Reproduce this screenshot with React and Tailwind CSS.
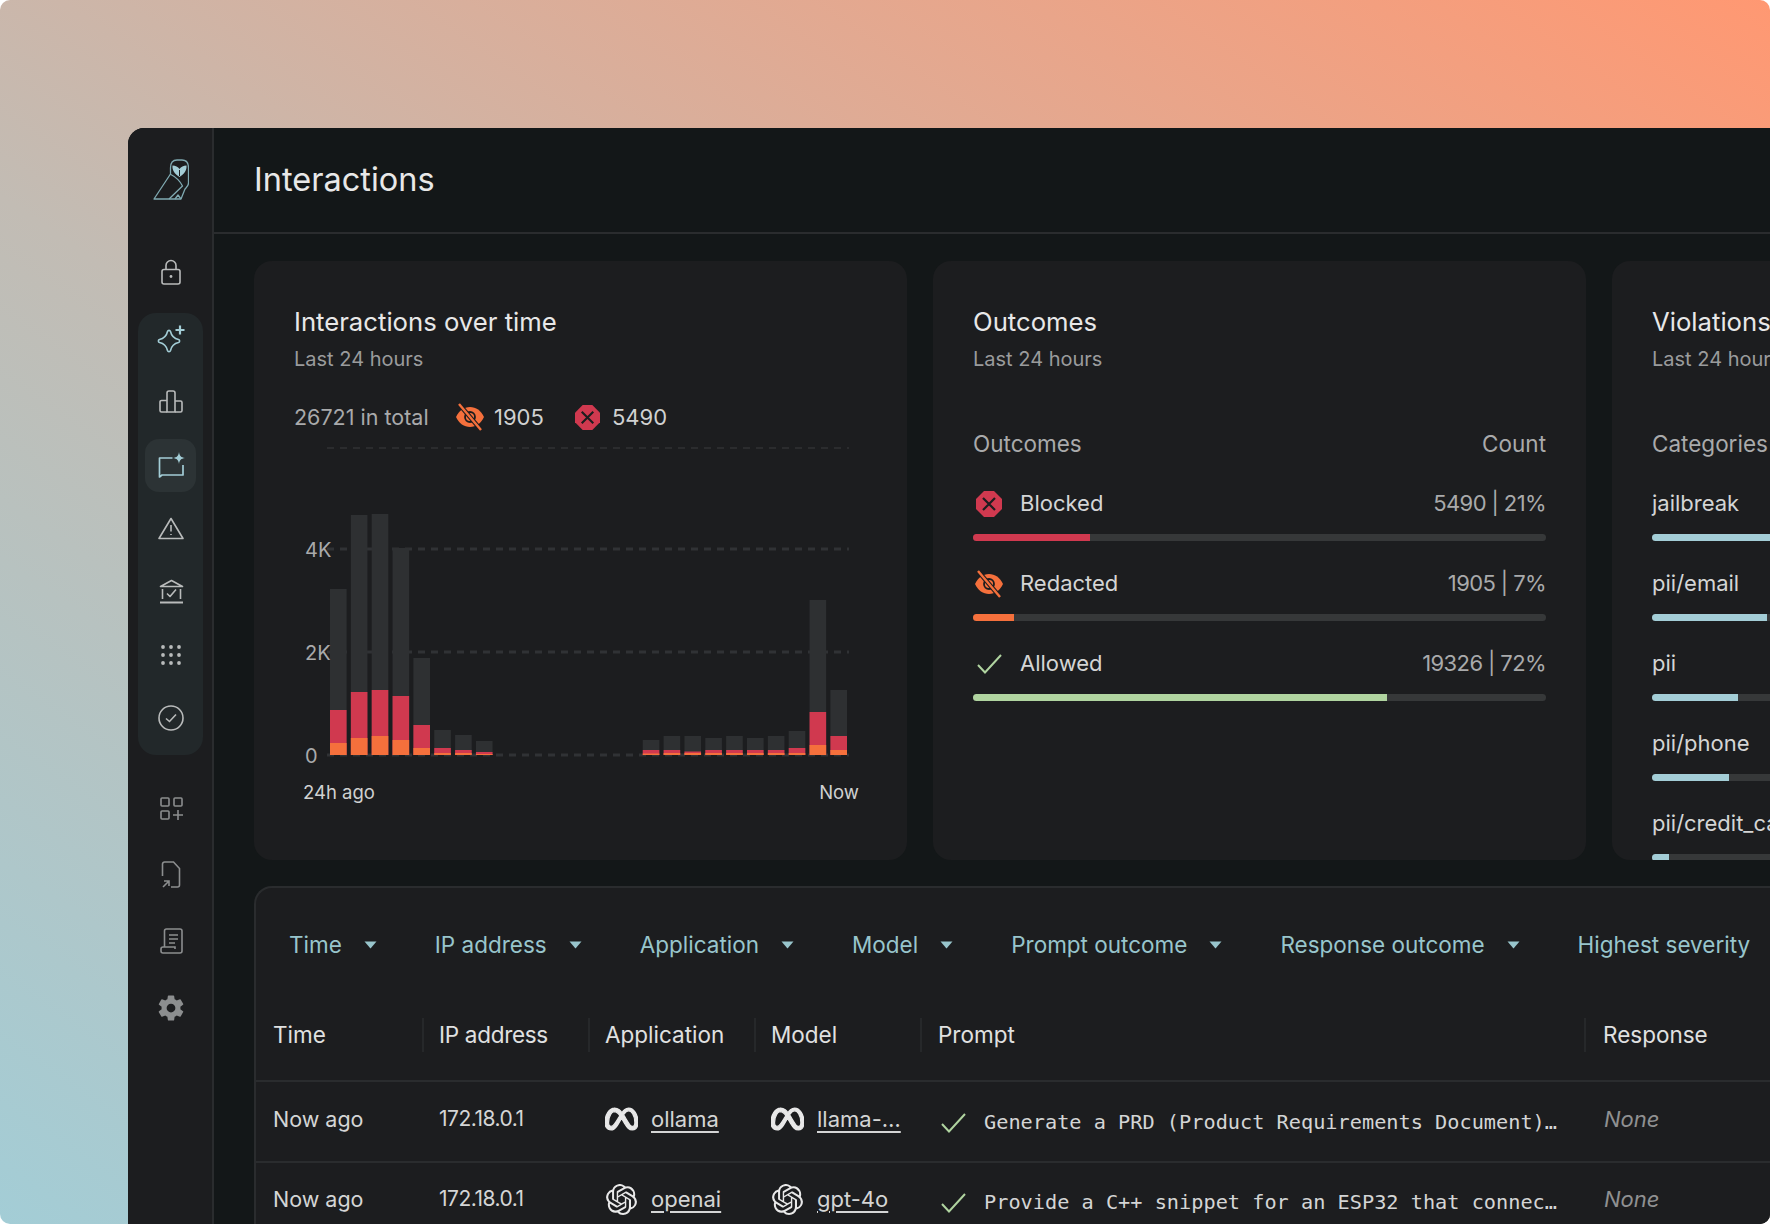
import { SiOpenai, SiMeta } from "react-icons/si";
import { IoSettingsSharp } from "react-icons/io5";

const bars = [
  [166, 45, 12], [240, 63, 17], [241, 65, 19], [207, 59, 15], [97, 30, 7], [25, 7, 2], [20, 5, 2], [14, 3, 1],
  null, null, null, null, null, null, null,
  [15, 5, 1.5], [19, 5, 2], [19, 3.5, 2], [17, 5, 2], [19, 5, 2], [17, 5, 2], [19, 5, 2], [24, 7, 2],
  [155, 43, 10], [65, 19, 5],
];

const Owl = () => (
  <svg width="36" height="42" viewBox="0 0 36 42" fill="none" stroke="#7fa9b1" strokeWidth="1.3" strokeLinejoin="round">
    <path d="M17.5 15V9C17.5 4 20 1 24 1H29C33 1 35.5 4 35.5 9V24C35.5 27 34 28 32 30L28 40H1L17.5 15Z" />
    <path d="M17 15C21 17 27 22 29.5 27L16 40" />
    <path d="M22 40L25 36L28 40" />
    <path d="M19.5 6.500C22.500 6.500 25 8 26.500 10C28 8 30.500 6.500 33.500 6.500C34 11 31.500 15 26.500 18C21.500 15 19 11 19.500 6.500Z" fill="#a3cdd6" stroke="none" />
    <path d="M26.500 11V17" stroke="#1c1d1f" strokeWidth="1" />
  </svg>
);

const Lock = () => (
  <svg width="20" height="26" viewBox="0 0 20 26" fill="none" stroke="#b9bbbb" strokeWidth="1.6">
    <rect x="1" y="10.5" width="18" height="14.5" rx="2" />
    <path d="M5 10.5V6.5a5 5 0 0 1 10 0v4" />
    <circle cx="10" cy="17.5" r="1.4" fill="#b9bbbb" stroke="none" />
  </svg>
);

const SparklePlus = () => (
  <svg width="28" height="28" viewBox="0 0 28 28" fill="none" stroke="#a3cdd6" strokeWidth="1.6" strokeLinejoin="round">
    <path d="M10.500 6.500C11 5 13 5 13.500 6.500C14.500 11 17 13.500 21.500 14.500C23 15 23 17 21.500 17.500C17 18.500 14.500 21 13.500 25.500C13 27 11 27 10.500 25.500C9.500 21 7 18.500 2.500 17.500C1 17 1 15 2.500 14.500C7 13.500 9.500 11 10.500 6.500Z" />
    <path d="M23 0.500V9.500M18.500 5H27.500" strokeWidth="2.2" />
  </svg>
);

const BarsIcon = () => (
  <svg width="24" height="23" viewBox="0 0 24 23" fill="none" stroke="#b9bbbb" strokeWidth="1.6" strokeLinejoin="round">
    <path d="M8 22H2.500A1.500 1.500 0 0 1 1 20.500V12A1.500 1.500 0 0 1 2.500 10.500H8" />
    <path d="M8 22V3A2 2 0 0 1 10 1H14A2 2 0 0 1 16 3V22H8Z" />
    <path d="M16 11H21.500A1.500 1.500 0 0 1 23 12.500V20.500A1.500 1.500 0 0 1 21.500 22H16" />
  </svg>
);

const ChatSpark = () => (
  <svg width="27" height="27" viewBox="0 0 27 27" fill="none" stroke="#a3cdd6" strokeWidth="1.7" strokeLinejoin="round">
    <path d="M14.500 6H1.500V25L4 23H25V13" />
    <path d="M21 0C21.600 4 23 5.400 27 6C23 6.600 21.600 8 21 12C20.400 8 19 6.600 15 6C19 5.400 20.400 4 21 0Z" fill="#a3cdd6" stroke="none" />
  </svg>
);

const Warning = () => (
  <svg width="26" height="23" viewBox="0 0 26 23" fill="none" stroke="#b9bbbb" strokeWidth="1.6" strokeLinejoin="round">
    <path d="M13 1.500L25 21.500H1L13 1.500Z" />
    <path d="M13 8V14.500M13 17V18" />
  </svg>
);

const Bank = () => (
  <svg width="25" height="25" viewBox="0 0 25 25" fill="none" stroke="#b9bbbb" strokeWidth="1.6" strokeLinejoin="round">
    <path d="M1.500 7.500L12.500 1.500L23.500 7.500H1.500Z" />
    <path d="M3.500 10V20M21.500 10V20M8 14.500L11 17.500L17 10.500" />
    <path d="M1 23.500H24" strokeWidth="2" />
  </svg>
);

const Dots = () => (
  <svg width="20" height="20" viewBox="0 0 20 20" fill="#b9bbbb">
    {[2, 10, 18].map((y) => [2, 10, 18].map((x) => <circle key={`${x}-${y}`} cx={x} cy={y} r="1.9" />))}
  </svg>
);

const CircleCheck = () => (
  <svg width="26" height="26" viewBox="0 0 26 26" fill="none" stroke="#b9bbbb" strokeWidth="1.6">
    <circle cx="13" cy="13" r="12" />
    <path d="M8 13.500L11.500 16.500L18 9.500" />
  </svg>
);

const Apps = () => (
  <svg width="23" height="23" viewBox="0 0 23 23" fill="none" stroke="#8c8e8f" strokeWidth="1.6">
    <rect x="1" y="1" width="8" height="8" rx="1" />
    <rect x="14" y="1" width="8" height="8" rx="1" />
    <rect x="1" y="14" width="8" height="8" rx="1" />
    <path d="M18 13V23M13 18H23" />
  </svg>
);

const FileArrow = () => (
  <svg width="20" height="27" viewBox="0 0 20 27" fill="none" stroke="#8c8e8f" strokeWidth="1.6">
    <path d="M1.500 15V3A2 2 0 0 1 3.500 1H12.500L18.500 7.500V24A2 2 0 0 1 16.500 26H10" />
    <path d="M2 26L8 20M3 20H8V25" />
  </svg>
);

const Scroll = () => (
  <svg width="23" height="26" viewBox="0 0 23 26" fill="none" stroke="#8c8e8f" strokeWidth="1.6">
    <path d="M4.500 19V3A2 2 0 0 1 6.500 1H20A2 2 0 0 1 22 3V23A2 2 0 0 1 20 25H3A2 2 0 0 1 1 23V21A2 2 0 0 1 3 19H15V21" />
    <path d="M9 7H18M9 11H18M9 15H15" />
  </svg>
);

const EyeOff = ({ w = 30, h = 28 }) => (
  <svg width={w} height={h} viewBox="0 0 30 28" fill="none">
    <path d="M1 14C4 7.500 9 4 15 4C21 4 26 7.500 29 14C26 20.500 21 24 15 24C9 24 4 20.500 1 14Z" fill="#f5703c" />
    <circle cx="15" cy="14" r="5" stroke="#1c1d1f" strokeWidth="1.800" />
    <path d="M4 1L26 27" stroke="#1c1d1f" strokeWidth="4.500" />
    <path d="M4 1L26 27" stroke="#f5703c" strokeWidth="2.400" />
  </svg>
);

const Blocked = ({ size = 26 }) => (
  <svg width={size} height={size} viewBox="0 0 26 26">
    <path d="M8 0H18L26 8V18L18 26H8L0 18V8Z" fill="#d0394f" />
    <path d="M7 7L19 19M19 7L7 19" stroke="#1c1d1f" strokeWidth="2.200" />
  </svg>
);

const Check = ({ w = 25, h = 20 }) => (
  <svg width={w} height={h} viewBox="0 0 25 20" fill="none" stroke="#b0d4a0" strokeWidth="2">
    <path d="M1 11L8 18.500L24 1" />
  </svg>
);

const Caret = () => (
  <svg width="13" height="8" viewBox="0 0 13 8" fill="#98c5cc">
    <path d="M0.500 0.500H12.500L6.500 7.500Z" />
  </svg>
);

const NavItem = ({ active, children }) => (
  <div className={active ? "flex h-[53px] w-[51px] items-center justify-center rounded-[14px] bg-[#2c3335] pl-[2px]" : "flex h-[53px] w-[51px] items-center justify-center pl-[2px]"}>
    {children}
  </div>
);

const Sidebar = () => (
  <aside className="flex h-full w-[86px] shrink-0 flex-col items-center border-r-2 border-[#2a2c2e] bg-[#1c1d1f]">
    <div className="mt-[31px] ml-[2px]"><Owl /></div>
    <div className="mt-[58px] ml-[2px]"><Lock /></div>
    <div className="mt-[28px] flex w-[65px] flex-col items-center gap-[10.3px] rounded-[18px] bg-[#22282a] pb-[10px]">
      <div className="-mt-[1px]"><NavItem><SparklePlus /></NavItem></div>
      <NavItem><BarsIcon /></NavItem>
      <NavItem active><ChatSpark /></NavItem>
      <NavItem><Warning /></NavItem>
      <NavItem><Bank /></NavItem>
      <NavItem><Dots /></NavItem>
      <NavItem><CircleCheck /></NavItem>
    </div>
    <div className="mt-[27px] flex flex-col items-center gap-[13.500px]">
      <NavItem><Apps /></NavItem>
      <NavItem><FileArrow /></NavItem>
      <NavItem><Scroll /></NavItem>
      <NavItem><IoSettingsSharp size={28} color="#8c8e8f" /></NavItem>
    </div>
  </aside>
);

const CardTitle = ({ title }) => (
  <>
    <h2 className="text-[25.7px] leading-[32px] text-[#e8e8e8]">{title}</h2>
    <p className="mt-[6px] text-[20px] leading-[30px] text-[#9a9b9c]">Last 24 hours</p>
  </>
);

const Chart = () => (
  <svg width="575" height="370" viewBox="0 0 575 370" className="mt-[8px] block">
    {[8, 109, 212, 315].map((y, i) => (
      <line key={y} x1="33" x2="555" y1={y} y2={y} stroke="#303235" strokeWidth={i === 0 ? 1.500 : 3} strokeDasharray="7 6" />
    ))}
    {bars.map((b, i) => {
      if (!b) return null;
      const x = 36 + i * 20.85;
      return (
        <g key={i}>
          <rect x={x} y={315 - b[0]} width="16.600" height={b[0]} fill="#2e3032" />
          <rect x={x} y={315 - b[1]} width="16.600" height={b[1]} fill="#d0394f" />
          <rect x={x} y={315 - b[2]} width="16.600" height={b[2]} fill="#f5703c" />
        </g>
      );
    })}
    <g fill="#a9aaab" fontSize="20">
      <text x="11" y="117">4K</text>
      <text x="11" y="220">2K</text>
      <text x="11" y="323">0</text>
    </g>
    <g fill="#d0d1d1" fontSize="18.500">
      <text x="9" y="359">24h ago</text>
      <text x="565" y="359" textAnchor="end">Now</text>
    </g>
  </svg>
);

const ChartCard = () => (
  <section className="h-[599px] w-[653px] shrink-0 overflow-hidden rounded-[18px] bg-[#1c1d1f] px-[40px] pt-[45px]">
    <CardTitle title="Interactions over time" />
    <div className="mt-[28px] flex h-[30px] items-center text-[22px] text-[#d0d1d1]">
      <span className="w-[161px] text-[21.5px] text-[#a9aaab]">26721 in total</span>
      <EyeOff />
      <span className="ml-[9px] w-[81px]">1905</span>
      <Blocked size={25} />
      <span className="ml-[12px]">5490</span>
    </div>
    <Chart />
  </section>
);

const MeterRow = ({ icon, label, value, width, fill }) => (
  <div className="mb-[28px]">
    <div className="flex h-[30px] items-center text-[22px]">
      {icon && <div className="flex w-[47px] shrink-0 items-center pb-0">{icon}</div>}
      <span className="pb-[2px] text-[#d4d5d5]">{label}</span>
      <span className="ml-auto pb-[2px] tracking-[-0.6px] text-[#a9aaab]">{value}</span>
    </div>
    <div className="mt-[15px] h-[7px] overflow-hidden rounded-full bg-[#363839]">
      <div className={`h-full ${fill}`} style={{ width }} />
    </div>
  </div>
);

const OutcomesCard = () => (
  <section className="h-[599px] w-[653px] shrink-0 overflow-hidden rounded-[18px] bg-[#1c1d1f] px-[40px] pt-[45px]">
    <CardTitle title="Outcomes" />
    <div className="mt-[55px] mb-[30px] flex h-[30px] items-center justify-between text-[22.5px] text-[#a9aaab]">
      <span>Outcomes</span>
      <span>Count</span>
    </div>
    <MeterRow icon={<div className="ml-[3px]"><Blocked /></div>} label="Blocked" value="5490 | 21%" width="117px" fill="bg-[#d0394f]" />
    <MeterRow icon={<div className="ml-[1px]"><EyeOff /></div>} label="Redacted" value="1905 | 7%" width="41px" fill="bg-[#f5703c]" />
    <MeterRow icon={<div className="ml-[4px]"><Check /></div>} label="Allowed" value="19326 | 72%" width="414px" fill="bg-[#b0d4a0]" />
  </section>
);

const ViolationsCard = () => (
  <section className="h-[599px] w-[653px] shrink-0 overflow-hidden rounded-[18px] bg-[#1c1d1f] px-[40px] pt-[45px]">
    <CardTitle title="Violations" />
    <div className="mt-[55px] mb-[30px] flex h-[30px] items-center text-[22.5px] text-[#a9aaab]">
      <span>Categories</span>
    </div>
    <MeterRow label="jailbreak" width="190px" fill="bg-[#a3cdd6]" />
    <MeterRow label="pii/email" width="115px" fill="bg-[#a3cdd6]" />
    <MeterRow label="pii" width="86px" fill="bg-[#a3cdd6]" />
    <MeterRow label="pii/phone" width="77px" fill="bg-[#a3cdd6]" />
    <MeterRow label="pii/credit_card" width="17px" fill="bg-[#a3cdd6]" />
  </section>
);

const filters = ["Time", "IP address", "Application", "Model", "Prompt outcome", "Response outcome", "Highest severity"];
const columns = [
  ["Time", "pl-[17px]"],
  ["IP address", "border-l-2 border-[#26282a] pl-[15px] tracking-[-0.3px]"],
  ["Application", "border-l-2 border-[#26282a] pl-[15px]"],
  ["Model", "border-l-2 border-[#26282a] pl-[15px]"],
  ["Prompt", "border-l-2 border-[#26282a] pl-[16px]"],
  ["Response", "border-l-2 border-[#26282a] pl-[17px]"],
];
const gridCols = "grid grid-cols-[166px_166px_166px_166px_664px_1fr]";

const Brand = ({ children, name }) => (
  <div className="flex items-center gap-[13px] pl-[17px]">
    <div className="flex w-[33px] justify-center">{children}</div>
    <a className="underline underline-offset-4">{name}</a>
  </div>
);

const Row = ({ brand, app, model, prompt }) => (
  <div className={`${gridCols} h-[81px] items-center border-b-2 border-[#2a2c2e] pb-[5px] text-[22px] text-[#d4d5d5] last:pb-[7px]`}>
    <span className="pl-[17px] text-[21.5px]">Now ago</span>
    <span className="pl-[17px] text-[21px] tracking-[-0.5px]">172.18.0.1</span>
    <Brand name={app}>{brand}</Brand>
    <Brand name={model}>{brand}</Brand>
    <div className="flex items-center gap-[18px] pl-[21px]">
      <div className="mt-[7px]"><Check /></div>
      <span className="mt-[7px] font-['DejaVu_Sans_Mono',monospace] text-[20.25px] whitespace-nowrap">{prompt}</span>
    </div>
    <span className="pl-[20px] text-[#8f9091] italic">None</span>
  </div>
);

const TableCard = () => (
  <section className="mt-[26px] w-[1516px] rounded-tl-[18px] border-2 border-r-0 border-b-0 border-[#2a2c2e] bg-[#1c1d1f]">
    <div className="flex h-[99px] items-center gap-[58px] pt-[14px] pl-[33px] text-[22.5px] whitespace-nowrap text-[#98c5cc]">
      {filters.map((f, i) => (
        <div key={f} className="flex items-center gap-[22px]">
          <span>{f}</span>
          {i < filters.length - 1 && <Caret />}
        </div>
      ))}
    </div>
    <div className={`${gridCols} h-[95px] items-center border-b-2 border-[#2a2c2e] pt-[3px] text-[22.5px] text-[#e0e1e1]`}>
      {columns.map(([label, cls]) => (
        <div key={label} className={cls}>{label}</div>
      ))}
    </div>
    <Row brand={<SiMeta size={36} color="#e8e8e8" stroke="#e8e8e8" strokeWidth="0.9" />} app="ollama" model="llama-…" prompt="Generate a PRD (Product Requirements Document)…" />
    <Row brand={<SiOpenai size={31} color="#e8e8e8" />} app="openai" model="gpt-4o" prompt="Provide a C++ snippet for an ESP32 that connec…" />
  </section>
);

export default function App() {
  return (
    <div className="h-[1224px] w-[1770px] overflow-hidden bg-white font-['Inter',sans-serif]">
      <div className="h-full w-full overflow-hidden rounded-[10px] bg-[linear-gradient(to_top_right,#a3cdd6_0%,#c2bcb4_42%,#ff9872_100%)] pt-[128px] pl-[128px]">
        <div className="flex h-full overflow-hidden rounded-tl-[16px] bg-[#131718]">
          <Sidebar />
          <main className="min-w-0 flex-1">
            <header className="flex h-[106px] items-center border-b-2 border-[#2a2c2e] pl-[40px]">
              <h1 className="text-[32.5px] text-[#e8e8e8]">Interactions</h1>
            </header>
            <div className="pt-[27px] pl-[40px]">
              <div className="flex gap-[26px]">
                <ChartCard />
                <OutcomesCard />
                <ViolationsCard />
              </div>
              <TableCard />
            </div>
          </main>
        </div>
      </div>
    </div>
  );
}
